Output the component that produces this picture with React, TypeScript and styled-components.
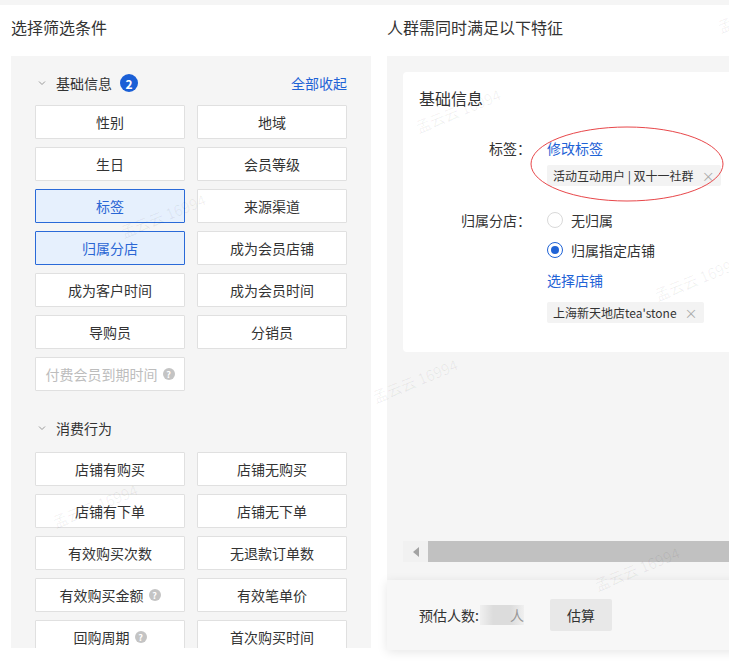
import { FC } from 'react';
import { createGlobalStyle, styled } from 'styled-components';

const GlobalStyle = createGlobalStyle`
  body {
    margin: 0;
    background: #fff;
    font-family: "Noto Sans CJK SC", "Noto Sans", sans-serif;
    color: #333;
  }
`;

const Page = styled.div`
  position: relative;
  width: 729px;
  height: 665px;
  overflow: hidden;
  background: #fff;
`;

const TopStrip = styled.div`
  height: 5px;
  background: #f5f5f5;
`;

const Columns = styled.div`
  display: flex;
  gap: 16px;
  padding-left: 11px;
`;

const Column = styled.div<{ $width: number }>`
  flex: none;
  width: ${(p) => p.$width}px;
  display: flex;
  flex-direction: column;
`;

const Title = styled.div`
  height: 51px;
  box-sizing: border-box;
  padding-top: 11px;
  line-height: 22px;
  font-size: 16px;
  color: #333;
`;

const LeftPanel = styled.div`
  height: 592px;
  overflow: hidden;
  background: #f5f5f5;
  padding: 15px 24px 0;
  box-sizing: border-box;
`;

const SectionHead = styled.div<{ $first?: boolean }>`
  height: 24px;
  display: flex;
  align-items: center;
  margin: ${(p) => (p.$first ? '0 0 10px' : '25px 0 12px')};
  font-size: 14px;
  color: #333;
`;

const Chevron = styled.svg`
  width: 8px;
  height: 6px;
  margin: 0 10px 0 3px;
`;

const Badge = styled.span`
  width: 18px;
  height: 18px;
  border-radius: 50%;
  background: #1a5fd6;
  color: #fff;
  font-size: 12px;
  font-weight: bold;
  display: flex;
  align-items: center;
  justify-content: center;
  margin-left: 8px;
`;

const Link = styled.a`
  color: #1f63d6;
  font-size: 14px;
  cursor: pointer;
`;

const HeadLink = styled(Link)`
  margin-left: auto;
`;

const Grid = styled.div`
  display: grid;
  grid-template-columns: 150px 150px;
  column-gap: 12px;
  row-gap: 8px;
`;

const Chip = styled.div<{ $active?: boolean; $disabled?: boolean }>`
  height: 34px;
  box-sizing: border-box;
  display: flex;
  align-items: center;
  justify-content: center;
  gap: 5px;
  font-size: 14px;
  background: ${(p) => (p.$active ? '#e6f0fd' : '#fff')};
  border: 1px solid ${(p) => (p.$active ? '#2a6ad8' : '#e0e0e0')};
  color: ${(p) => (p.$active ? '#2a66d4' : p.$disabled ? '#bdbdbd' : '#333')};
  border-radius: 1px;
`;

const Help = styled.span`
  width: 12px;
  height: 12px;
  border-radius: 50%;
  background: #c4c4c4;
  color: #fff;
  font-size: 9px;
  font-weight: bold;
  display: flex;
  align-items: center;
  justify-content: center;
`;

const RightPanel = styled.div`
  height: 524px;
  background: #f5f5f5;
  padding: 16px 0 0 16px;
  box-sizing: border-box;
  display: flex;
  flex-direction: column;
`;

const Card = styled.div`
  position: relative;
  width: 400px;
  background: #fff;
  border-radius: 4px;
  padding: 15px 16px 29px;
  box-sizing: border-box;
`;

const CardTitle = styled.div`
  font-size: 16px;
  line-height: 22px;
  margin-bottom: 29px;
`;

const Form = styled.div`
  display: grid;
  grid-template-columns: 112px 1fr;
  column-gap: 16px;
  row-gap: 24px;
  font-size: 14px;
`;

const Label = styled.div`
  text-align: right;
  line-height: 20px;
`;

const Field = styled.div`
  display: flex;
  flex-direction: column;
  align-items: flex-start;
  line-height: 20px;
`;

const Tag = styled.span<{ $gap: number }>`
  margin-top: ${(p) => p.$gap}px;
  display: inline-flex;
  align-items: center;
  height: 21px;
  padding: 0 6px;
  background: #f3f3f3;
  border-radius: 2px;
  font-size: 12px;
  color: #333;
  gap: 8px;
`;

const Close = styled.span`
  color: #aaa;
  font-size: 13px;
`;

const Radio = styled.label`
  display: flex;
  align-items: center;
  gap: 8px;
  margin-bottom: 10px;
`;

const RadioDot = styled.span<{ $on?: boolean }>`
  width: 16px;
  height: 16px;
  box-sizing: border-box;
  border-radius: 50%;
  border: 1px solid ${(p) => (p.$on ? '#1f63d6' : '#d9d9d9')};
  display: flex;
  align-items: center;
  justify-content: center;
  &::after {
    content: '';
    display: ${(p) => (p.$on ? 'block' : 'none')};
    width: 8px;
    height: 8px;
    border-radius: 50%;
    background: #1f63d6;
  }
`;

const Circle = styled.svg`
  position: absolute;
  left: 126px;
  top: 52px;
  width: 196px;
  height: 80px;
  overflow: visible;
`;

const ScrollBar = styled.div`
  margin-top: auto;
  margin-bottom: 18px;
  height: 21px;
  display: flex;
  background: #f1f1f1;
`;

const ScrollArrow = styled.div`
  width: 25px;
  display: flex;
  align-items: center;
  justify-content: center;
  &::before {
    content: '';
    border-style: solid;
    border-width: 5px 6px 5px 0;
    border-color: transparent #a3a3a3 transparent transparent;
  }
`;

const ScrollThumb = styled.div`
  flex: 1;
  background: #c1c1c1;
`;

const Footer = styled.div`
  height: 70px;
  background: #f7f7f7;
  box-shadow: 0 2px 10px rgba(0, 0, 0, 0.1);
  display: flex;
  align-items: center;
  padding-left: 32px;
  font-size: 14px;
`;

const Blur = styled.span`
  width: 44px;
  height: 20px;
  margin-left: 1px;
  background: linear-gradient(90deg, #f0f0f0, #dcdcdc 30%, #dcdcdc 70%, #f0f0f0);
  color: #999;
  text-align: right;
  line-height: 20px;
  overflow: hidden;
`;

const EstimateButton = styled.button`
  margin-left: 26px;
  width: 62px;
  height: 32px;
  border: none;
  border-radius: 2px;
  background: #e8e8e8;
  font-family: inherit;
  font-size: 14px;
  color: #333;
`;

const Watermark = styled.span<{ $x: number; $y: number }>`
  position: absolute;
  left: ${(p) => p.$x}px;
  top: ${(p) => p.$y}px;
  transform: rotate(-22deg);
  color: rgba(0, 0, 0, 0.06);
  font-size: 15px;
  white-space: nowrap;
  pointer-events: none;
`;

const basic: { name: string; active?: boolean; disabled?: boolean; help?: boolean }[] = [
  { name: '性别' },
  { name: '地域' },
  { name: '生日' },
  { name: '会员等级' },
  { name: '标签', active: true },
  { name: '来源渠道' },
  { name: '归属分店', active: true },
  { name: '成为会员店铺' },
  { name: '成为客户时间' },
  { name: '成为会员时间' },
  { name: '导购员' },
  { name: '分销员' },
  { name: '付费会员到期时间', disabled: true, help: true },
];

const consume: { name: string; help?: boolean }[] = [
  { name: '店铺有购买' },
  { name: '店铺无购买' },
  { name: '店铺有下单' },
  { name: '店铺无下单' },
  { name: '有效购买次数' },
  { name: '无退款订单数' },
  { name: '有效购买金额', help: true },
  { name: '有效笔单价' },
  { name: '回购周期', help: true },
  { name: '首次购买时间' },
];

const Arrow: FC = () => (
  <Chevron viewBox="0 0 8 6">
    <polyline points="1,1.5 4,4.5 7,1.5" fill="none" stroke="#999" strokeWidth="1" />
  </Chevron>
);

const App: FC = () => (
  <Page>
    <GlobalStyle />
    <TopStrip />
    <Columns>
      <Column $width={360}>
        <Title>选择筛选条件</Title>
        <LeftPanel>
          <SectionHead $first>
            <Arrow />
            基础信息
            <Badge>2</Badge>
            <HeadLink>全部收起</HeadLink>
          </SectionHead>
          <Grid>
            {basic.map((b) => (
              <Chip key={b.name} $active={b.active} $disabled={b.disabled}>
                {b.name}
                {b.help && <Help>?</Help>}
              </Chip>
            ))}
          </Grid>
          <SectionHead>
            <Arrow />
            消费行为
          </SectionHead>
          <Grid>
            {consume.map((c) => (
              <Chip key={c.name}>
                {c.name}
                {c.help && <Help>?</Help>}
              </Chip>
            ))}
          </Grid>
        </LeftPanel>
      </Column>
      <Column $width={420}>
        <Title>人群需同时满足以下特征</Title>
        <RightPanel>
          <Card>
            <CardTitle>基础信息</CardTitle>
            <Form>
              <Label>标签：</Label>
              <Field>
                <Link>修改标签</Link>
                <Tag $gap={7}>
                  活动互动用户 | 双十一社群 <Close>×</Close>
                </Tag>
              </Field>
              <Label>归属分店：</Label>
              <Field>
                <Radio>
                  <RadioDot />
                  无归属
                </Radio>
                <Radio>
                  <RadioDot $on />
                  归属指定店铺
                </Radio>
                <Link>选择店铺</Link>
                <Tag $gap={12}>
                  上海新天地店tea'stone <Close>×</Close>
                </Tag>
              </Field>
            </Form>
            <Circle viewBox="0 0 196 80">
              <ellipse cx="98" cy="40" rx="96" ry="37" fill="none" stroke="#e8474a" strokeWidth="1" />
            </Circle>
          </Card>
          <ScrollBar>
            <ScrollArrow />
            <ScrollThumb />
          </ScrollBar>
        </RightPanel>
        <Footer>
          预估人数:
          <Blur>人</Blur>
          <EstimateButton>估算</EstimateButton>
        </Footer>
      </Column>
    </Columns>
    <Watermark $x={118} $y={205}>孟云云 16994</Watermark>
    <Watermark $x={50} $y={495}>孟云云 16994</Watermark>
    <Watermark $x={413} $y={100}>孟云云 16994</Watermark>
    <Watermark $x={370} $y={370}>孟云云 16994</Watermark>
    <Watermark $x={652} $y={268}>孟云云 16994</Watermark>
    <Watermark $x={592} $y={558}>孟云云 16994</Watermark>
    <Watermark $x={715} $y={0}>孟云云 16994</Watermark>
  </Page>
);

export default App;
